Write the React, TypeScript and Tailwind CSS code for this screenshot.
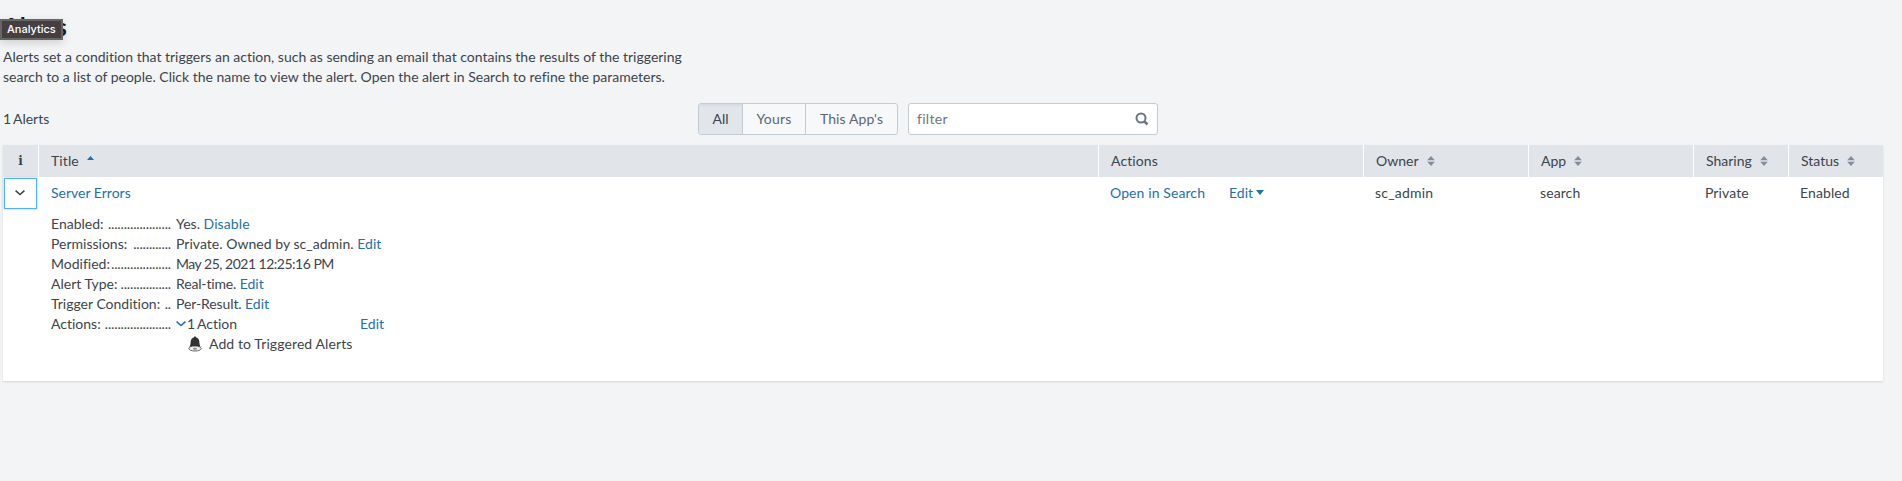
import type { ReactNode } from "react";

function Sort() {
  return (
    <svg className="ml-[8px] shrink-0" width="8" height="10" viewBox="0 0 8 10" fill="#818d99">
      <path d="M4 0 7.8 4.200H.2ZM4 10 7.8 5.800H.2Z" />
    </svg>
  );
}

function Link({ children, className = "" }: { children: ReactNode; className?: string }) {
  return <a href="#" className={`text-[#1e70ae] ${className}`}>{children}</a>;
}

function HeadCell({ children, className = "" }: { children: ReactNode; className?: string }) {
  return <div className={`flex items-center border-l border-white pb-px pl-3 ${className}`}>{children}</div>;
}

function Detail({ label, dots, children }: { label: string; dots: string; children: ReactNode }) {
  return (
    <div className="flex h-5">
      <dt className="flex w-[120px] shrink-0 justify-between whitespace-nowrap">
        <span>{label}</span>
        <span className="tracking-[-0.15px]">{dots}</span>
      </dt>
      <dd className="ml-[5px] flex whitespace-pre">{children}</dd>
    </div>
  );
}

const columns = "grid grid-cols-[35px_1060px_265px_165px_165px_95px_95px]";

export default function App() {
  return (
    <div className="h-[481px] overflow-hidden bg-[#f2f4f5] pl-[3px] font-['Lato','Open_Sans',sans-serif] text-[14px] leading-5 text-[#3c444d] [font-variant-ligatures:none]">
      <header className="relative h-[47px] pt-[15px]">
        <h1 className="text-[24px] leading-6 font-bold text-[#1a1c20]">Alerts</h1>
        <div className="absolute top-[19px] -left-[3px] flex h-[21px] w-[63px] items-center border-2 border-[#666] bg-[#453f43] pb-px pl-[5px] font-['Inter',sans-serif] text-[11px] font-medium text-white shadow-[0_3px_9px_rgba(0,0,0,0.15)]">
          Analytics
        </div>
      </header>
      <p className="whitespace-nowrap">
        Alerts set a condition that triggers an action, such as sending an email that contains the results of the triggering
        <br />
        search to a list of people. Click the name to view the alert. Open the alert in Search to refine the parameters.
      </p>
      <div className="mt-[16px] flex h-8 items-center">
        <div className="w-[695px] pb-px"><span className="tracking-[-1.300px]">1</span> Alerts</div>
        <div className="flex h-8 w-[200px] overflow-hidden rounded-[3px] border border-[#c3cbd4] bg-[#f7f8fa] text-[#5c6773]">
          <button className="w-[44px] border-r border-[#c3cbd4] bg-[#e1e6eb] pb-px text-[#3c444d] shadow-[inset_0_2px_1px_#d5dce5]">All</button>
          <button className="w-[63px] border-r border-[#c3cbd4] pb-px tracking-[0.2px]">Yours</button>
          <button className="flex-1 pb-px tracking-[0.1px]">This App's</button>
        </div>
        <div className="ml-[10px] flex h-8 w-[250px] items-center justify-between rounded-[3px] border border-[#c3cbd4] bg-white pr-2 pl-2 text-[#6b7785]">
          <span className="pb-px tracking-[0.3px]">filter</span>
          <svg width="14" height="14" viewBox="0 0 14 14" fill="none" stroke="#6b7785">
            <circle cx="6" cy="6" r="4.5" strokeWidth="2" />
            <path d="M9.3 9.3 12.5 12.5" strokeWidth="2.6" />
          </svg>
        </div>
      </div>
      <main className="mt-[10px] h-[236px] w-[1880px] bg-white shadow-[0_1px_2px_rgba(0,0,0,0.13)]">
        <div className={`${columns} h-8 bg-[#e1e4e9]`}>
          <div className="flex items-center justify-center font-['DejaVu_Serif',serif] text-[12px] font-bold">i</div>
          <HeadCell>
            <span className="tracking-[0.1px]">Title</span>
            <svg className="mb-[6px] ml-[8px]" width="7" height="4" viewBox="0 0 7 4" fill="#1e70ae"><path d="M3.5 0 7 4H0Z" /></svg>
          </HeadCell>
          <HeadCell className="tracking-[0.1px]">Actions</HeadCell>
          <HeadCell>Owner<Sort /></HeadCell>
          <HeadCell>App<Sort /></HeadCell>
          <HeadCell>Sharing<Sort /></HeadCell>
          <HeadCell>Status<Sort /></HeadCell>
        </div>
        <div className={`${columns} h-8 items-center whitespace-nowrap`}>
          <button className="ml-px flex h-[31px] w-[33px] items-center justify-center border border-[#51b2f5] shadow-[0_0_2px_#7cc6ff]">
            <svg className="mr-px" width="10" height="6" viewBox="0 0 10 6" fill="none" stroke="#3c444d" strokeWidth="1.500"><path d="m.6.6 4.400 4 4.400-4" /></svg>
          </button>
          <Link className="pb-px pl-[13px]">Server Errors</Link>
          <div className="flex items-center pb-px pl-3">
            <Link className="w-[95px] tracking-[0.1px]">Open in Search</Link>
            <Link className="ml-6 flex items-center">
              Edit
              <svg className="ml-[3px]" width="8" height="5" viewBox="0 0 8 5" fill="#1e70ae"><path d="M0 0h8L4 5Z" /></svg>
            </Link>
          </div>
          <div className="pb-px pl-3 tracking-[0.2px]">sc_admin</div>
          <div className="pb-px pl-3 tracking-[0.1px]">search</div>
          <div className="pb-px pl-3 tracking-[0.1px]">Private</div>
          <div className="pb-px pl-3 tracking-[0.1px]">Enabled</div>
        </div>
        <dl className="pt-[5px] pl-12">
          <Detail label="Enabled:" dots="....................">Yes. <Link className="tracking-[0.1px]">Disable</Link></Detail>
          <Detail label="Permissions:" dots="............"><span className="tracking-[0.03px]">Private. Owned by sc_admin. </span><Link>Edit</Link></Detail>
          <Detail label="Modified:" dots="..................."><span className="tracking-[-0.5px]">May 25, 2021 12:25:16 PM</span></Detail>
          <Detail label="Alert Type:" dots="................"><span className="tracking-[-0.15px]">Real-time. </span><Link>Edit</Link></Detail>
          <Detail label="Trigger Condition:" dots=".."><span className="tracking-[-0.1px]">Per-Result. </span><Link>Edit</Link></Detail>
          <Detail label="Actions:" dots=".....................">
            <span className="flex w-[184px] items-center">
              <svg className="mr-px" width="10" height="6" viewBox="0 0 10 6" fill="none" stroke="#1e70ae" strokeWidth="1.500"><path d="m.6.6 4.400 4 4.400-4" /></svg>
              <span><span className="tracking-[-1.300px]">1</span> Action</span>
            </span>
            <Link>Edit</Link>
          </Detail>
          <dd className="flex h-5 items-center pl-[137px]">
            <svg className="mr-[7px]" width="14" height="16" viewBox="0 0 14 16">
              <ellipse cx="7" cy="12.500" rx="6.200" ry="2.500" fill="#eee" stroke="#666" />
              <path d="M7 .5c-.8 0-1.200.5-1.300 1C3.300 2.200 2.700 4 2.600 6.500 2.500 8.600 1.800 10 1.500 11c2.500-1.300 8.500-1.300 11 0-.3-1-1-2.400-1.100-4.500C11.300 4 10.700 2.200 8.300 1.500 8.200 1 7.800.5 7 .5Z" fill="#333" />
              <ellipse cx="7" cy="12.800" rx="2" ry="1" fill="#888" />
            </svg>
            <span className="tracking-[0.1px]">Add to Triggered Alerts</span>
          </dd>
        </dl>
      </main>
    </div>
  );
}
